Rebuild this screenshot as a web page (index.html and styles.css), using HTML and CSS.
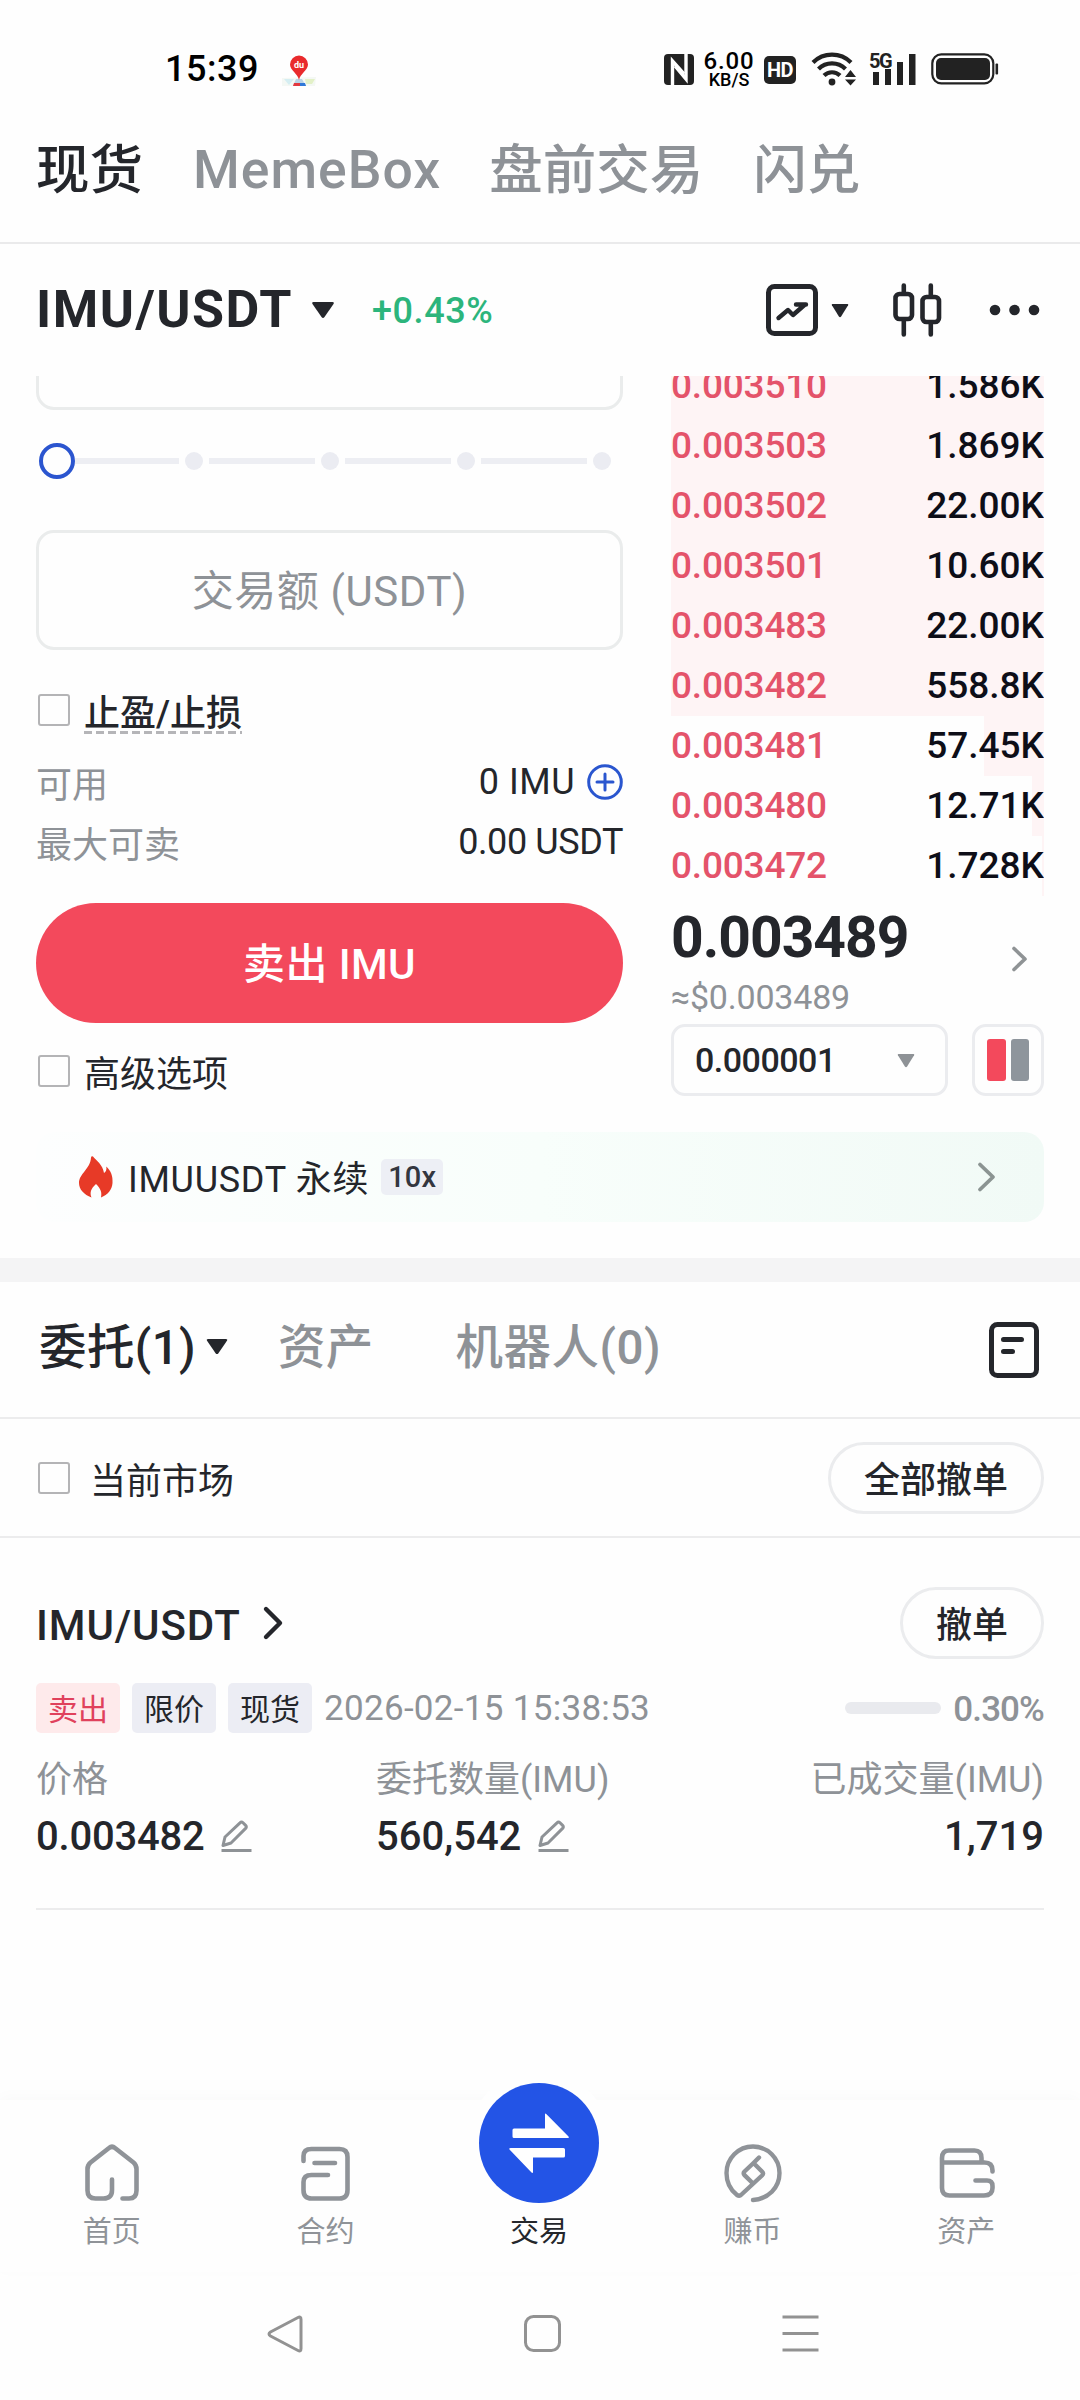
FILE: index.html
```html
<!DOCTYPE html>
<html lang="zh-CN">
<head>
<meta charset="utf-8">
<title>IMU/USDT 现货交易</title>
<link rel="stylesheet" href="styles.css">
</head>
<body>
<div class="screen">

  <header class="status">
    <span class="clock">15:39</span>
    <svg class="map-pin" width="36" height="32" viewBox="0 0 36 32">
      <path d="M1 23 35 22 34 31 1 31Z" fill="#f4f8f4"/>
      <path d="M3 24h10l-5 6z" fill="#d5eef2"/><path d="M24 24h10l-3 5h-6z" fill="#e3f1c8"/>
      <path d="M15 24h6l4 7H12z" fill="#b9d3e6"/>
      <path d="M13 28h6v3h-7z" fill="#e2383f"/><path d="M19 28h5l1 3h-6z" fill="#2f78d8"/>
      <path d="M18 25C17 19 9 15 9 9.500a9 9 0 0 1 18 0C27 15 19 19 18 25z" fill="#e92a2c"/>
      <text x="18" y="13" class="pin-text">du</text>
    </svg>
    <div class="status-right">
      <svg width="30" height="31" viewBox="0 0 30 31">
        <rect width="30" height="31" rx="4" fill="#222"/>
        <path d="M8.500 31V7L20 20" fill="none" stroke="#fff" stroke-width="3.400"/>
        <path d="M22 0V25L11 12" fill="none" stroke="#fff" stroke-width="3.400"/>
      </svg>
      <div class="speed"><span>6.00</span><small>KB/S</small></div>
      <span class="hd">HD</span>
      <svg class="wifi" width="46" height="36" viewBox="0 0 46 36">
        <g fill="none" stroke="#222" stroke-width="4.200">
          <path d="M2 12.500a27 27 0 0 1 38 0"/><path d="M7.500 19a19 19 0 0 1 27 0"/><path d="M13 25.500a11.500 11.500 0 0 1 16 0"/>
        </g>
        <circle cx="21" cy="32" r="3.400" fill="#222"/>
        <path d="M34 27l5.500-7 5.500 7zM34 29.500h11l-5.500 6z" fill="#222"/>
      </svg>
      <svg class="signal" width="48" height="34" viewBox="0 0 48 34">
        <text x="0" y="16.500" class="g5">5G</text>
        <path d="M4 21h6v13H4zM16 18h6v16h-6zM28 11h6v23h-6zM40 3h6.500v31H40z" fill="#222"/>
      </svg>
      <svg class="battery" width="68" height="32" viewBox="0 0 68 32">
        <rect x="1.300" y="1.300" width="61" height="29" rx="9" fill="none" stroke="#222" stroke-width="2.200"/>
        <rect x="5" y="5" width="54" height="22" rx="5" fill="#222"/>
        <rect x="64.500" y="10.500" width="2.600" height="11" rx="1" fill="#222"/>
      </svg>
    </div>
  </header>

  <nav class="market-tabs">
    <span class="on">现货</span><span>MemeBox</span><span>盘前交易</span><span>闪兑</span>
  </nav>

  <section class="pair-bar">
    <h1>IMU/USDT</h1>
    <svg class="caret" width="24" height="19" viewBox="0 0 24 19"><path d="M2.500 1h19q2 0 1 2l-9 13q-1.500 2-3 0L1.500 3q-1-2 1-2z" fill="#24262b"/></svg>
    <span class="change">+0.43%</span>
    <div class="pair-tools">
      <svg width="52" height="52" viewBox="0 0 52 52" fill="none" stroke="#24262b" stroke-linecap="round" stroke-linejoin="round">
        <rect x="2.500" y="2.500" width="47" height="47" rx="6" stroke-width="5"/>
        <path d="M12.500 34 22 26l5 5L39 20.500M30 20.500H40" stroke-width="4.400"/>
      </svg>
      <svg class="mini" width="18" height="15" viewBox="0 0 18 15"><path d="M1.500 1h15q1.200 0 .6 1.200l-7 11.300q-1.100 1.300-2.200 0L.9 2.200Q.3 1 1.500 1z" fill="#24262b"/></svg>
      <svg class="candles" width="50" height="54" viewBox="0 0 50 54" fill="none" stroke="#24262b" stroke-linecap="round" stroke-width="4.600">
        <rect x="2.500" y="11" width="16.500" height="25" rx="4"/><path d="M10.800 2.500V10M10.800 38v13.500"/>
        <rect x="29.500" y="14" width="16.500" height="25" rx="4"/><path d="M37.800 2.500V13M37.800 41v10.500"/>
      </svg>
      <svg width="52" height="12" viewBox="0 0 52 12" fill="#24262b"><circle cx="6" cy="6" r="5.300"/><circle cx="25.500" cy="6" r="5.300"/><circle cx="45" cy="6" r="5.300"/></svg>
    </div>
  </section>

  <main class="trade">
    <section class="form">
      <div class="field-clip"><div class="field-tail"></div></div>
      <div class="slider">
        <i class="knob"></i><i class="track first"></i><i class="dot"></i><i class="track"></i><i class="dot"></i><i class="track"></i><i class="dot"></i><i class="track"></i><i class="dot"></i>
      </div>
      <div class="amount">交易额 (USDT)</div>
      <label class="check tpsl"><i class="box"></i><span class="dashed">止盈/止损</span></label>
      <div class="info first-info"><span>可用</span><b class="free">0 IMU</b>
        <svg width="36" height="36" viewBox="0 0 36 36" fill="none" stroke="#2a56cf" stroke-width="3" stroke-linecap="round"><circle cx="18" cy="18" r="16.300"/><path d="M10 18h16M18 10v16"/></svg>
      </div>
      <div class="info"><span>最大可卖</span><b>0.00 USDT</b></div>
      <div class="sell">卖出 IMU</div>
      <label class="check adv"><i class="box"></i><span>高级选项</span></label>
    </section>

    <section class="book">
      <div class="asks">
        <div class="ask full"><span>0.003510</span><b>1.586K</b></div>
        <div class="ask full"><span>0.003503</span><b>1.869K</b></div>
        <div class="ask full"><span>0.003502</span><b>22.00K</b></div>
        <div class="ask full"><span>0.003501</span><b>10.60K</b></div>
        <div class="ask full"><span>0.003483</span><b>22.00K</b></div>
        <div class="ask full"><span>0.003482</span><b>558.8K</b></div>
        <div class="ask" style="background-size:60px 100%"><span>0.003481</span><b>57.45K</b></div>
        <div class="ask" style="background-size:12px 100%"><span>0.003480</span><b>12.71K</b></div>
        <div class="ask" style="background-size:2px 100%"><span>0.003472</span><b>1.728K</b></div>
      </div>
      <div class="last">
        <div><strong>0.003489</strong><em>≈$0.003489</em></div>
        <svg width="18" height="28" viewBox="0 0 18 28" fill="none" stroke="#8f9395" stroke-width="3.600" stroke-linecap="round" stroke-linejoin="round"><path d="M3 3.500 14 14 3 24.500"/></svg>
      </div>
      <div class="book-tools">
        <div class="step"><span>0.000001</span><svg width="18" height="15" viewBox="0 0 18 15"><path d="M1.500 1h15q1.200 0 .6 1.200l-7 11.300q-1.100 1.300-2.200 0L.9 2.200Q.3 1 1.500 1z" fill="#8e9296"/></svg></div>
        <div class="layout"><i class="red"></i><i></i></div>
      </div>
    </section>
  </main>

  <div class="perp">
    <svg width="34" height="42" viewBox="0 0 34 42"><path d="M14 .5C17 4 24 9 25 17c2-1 2.800-3.500 2.300-6.500C32 15 34 20 33.500 27 33 34 29 38.500 22 41.500c1-5 0-8.500-5-13.500-5 4.500-6.500 8.500-4.500 13.500C5 38.500 0 33.500 0 27 0 17.500 11.500 13 12 1.500Q12.500-.5 14 .5z" fill="#e73a27"/></svg>
    <span>IMUUSDT 永续</span><small>10x</small>
    <svg class="go" width="20" height="32" viewBox="0 0 20 32" fill="none" stroke="#8b9492" stroke-width="3.800" stroke-linecap="round" stroke-linejoin="round"><path d="M3 3.500 16 16 3 28.500"/></svg>
  </div>
  <div class="band"></div>

  <nav class="order-tabs">
    <span class="on">委托(1)</span>
    <svg class="caret" width="24" height="18" viewBox="0 0 24 19"><path d="M2.500 1h19q2 0 1 2l-9 13q-1.500 2-3 0L1.500 3q-1-2 1-2z" fill="#24262b"/></svg>
    <span class="assets">资产</span><span class="bots">机器人(0)</span>
    <svg class="list" width="50" height="56" viewBox="0 0 50 56" fill="none" stroke="#24262b" stroke-width="5" stroke-linecap="round"><rect x="2.500" y="2.500" width="45" height="51" rx="6"/><path d="M14.500 17.500h18M14.500 29.500h9"/></svg>
  </nav>
  <div class="filter">
    <label class="check wide"><i class="box"></i><span>当前市场</span></label>
    <span class="pill">全部撤单</span>
  </div>

  <article class="order">
    <div class="order-head">
      <h2>IMU/USDT</h2>
      <svg width="22" height="36" viewBox="0 0 22 36" fill="none" stroke="#24262b" stroke-width="4.400" stroke-linecap="round" stroke-linejoin="round"><path d="M4 4 18 18 4 32"/></svg>
      <span class="pill">撤单</span>
    </div>
    <div class="tags">
      <span class="tag sell-tag">卖出</span><span class="tag">限价</span><span class="tag">现货</span>
      <time>2026-02-15 15:38:53</time>
      <i class="bar"></i><b>0.30%</b>
    </div>
    <div class="cols">
      <div><span>价格</span><b class="price">0.003482 <svg width="31" height="33" viewBox="0 0 31 33" fill="none" stroke="#8e9296" stroke-width="3"><path d="M2 25.500 4 17 19 2.800q1.500-1.500 3 0l2.600 2.600q1.500 1.500 0 3L10 23z" stroke-linejoin="round"/><path d="M.5 30.500h30"/></svg></b></div>
      <div><span>委托数量(IMU)</span><b>560,542 <svg width="31" height="33" viewBox="0 0 31 33" fill="none" stroke="#8e9296" stroke-width="3"><path d="M2 25.500 4 17 19 2.800q1.500-1.500 3 0l2.600 2.600q1.500 1.500 0 3L10 23z" stroke-linejoin="round"/><path d="M.5 30.500h30"/></svg></b></div>
      <div class="end"><span>已成交量(IMU)</span><b>1,719</b></div>
    </div>
  </article>

  <footer class="tabbar">
    <div class="tab">
      <svg width="56" height="60" viewBox="0 0 56 60" fill="none" stroke="#8f9398" stroke-width="4.600" stroke-linecap="round" stroke-linejoin="round"><path d="M38.500 55.500H45q7.500 0 7.500-8V26q0-4-3-6.500L31 5q-3-2.500-6 0L6.500 19.500q-3 2.500-3 6.500V47.500q0 8 8 8h8q8.500 0 8.500-8.500V36.500"/></svg>
      <span>首页</span></div>
    <div class="tab">
      <svg width="56" height="60" viewBox="0 0 56 60" fill="none" stroke="#8f9398" stroke-width="4.600" stroke-linecap="round" stroke-linejoin="round"><path d="M6.500 18V13q0-7 8-7h28q8 0 8 8V47q0 8.500-8 8.500H14.500q-8 0-8-8.500V39q0-7 8-7H31M17.500 20H38"/></svg>
      <span>合约</span></div>
    <div class="tab active">
      <div class="swap"><svg width="60" height="62" viewBox="0 0 60 62" fill="#fff"><path d="M5 16.500H36V2.500q0-2 1.500-.3L59.500 24.500q1 1.500-1 1.500H5q-1.500 0-1.500-1.500V18q0-1.500 1.500-1.500z"/><path d="M1.500 36H54.500q1.500 0 1.500 1.500V44q0 1.500-1.500 1.500H24V60q0 1.500-1.500.5L.5 37.500Q-.5 36 1.500 36z"/></svg></div>
      <span>交易</span></div>
    <div class="tab">
      <svg width="58" height="60" viewBox="0 0 58 60" fill="none" stroke="#8f9398" stroke-width="4.400" stroke-linecap="round" stroke-linejoin="round"><path d="M29 57C44 56 55.500 45 55.500 30A26.500 26.500 0 0 0 2.500 30C2.500 39 6.500 47 13 52q2.500 1.500 4.500-.5L38 32.500q2-2 0-4L29.500 20 20.500 28.500q-1.800 1.800 0 3.600L28 39.500M29.500 20 35 14.500"/></svg>
      <span>赚币</span></div>
    <div class="tab">
      <svg width="58" height="60" viewBox="0 0 58 60" fill="none" stroke="#8f9398" stroke-width="4.600" stroke-linecap="round" stroke-linejoin="round"><path d="M5 19.500H47.500q8 0 8 8V28.500M44.500 19V15q0-7.500-7-7.500H12q-7 0-7 7.500V45q0 7.500 7.500 7.500H47q8.500 0 8.500-7.500V43q0-5.500-5.500-5.500H38.500"/></svg>
      <span>资产</span></div>
  </footer>
  <footer class="sysnav">
    <svg width="36" height="38" viewBox="0 0 36 38"><path d="M31 2.500Q34 1 34 4.500v29q0 3.500-3 2L3.500 21q-3-2 0-4z"/></svg>
    <svg width="37" height="37" viewBox="0 0 37 37"><rect x="1.500" y="1.500" width="34" height="34" rx="8"/></svg>
    <svg width="37" height="37" viewBox="0 0 37 37"><path d="M.5 2h36M.5 18.500h36M.5 35h36"/></svg>
  </footer>
</div>
</body>
</html>
```
FILE: styles.css
```css
* { box-sizing: border-box; }
body {
  margin: 0;
  background: #fefefe;
  color: #24262b;
  font-family: Roboto, "Noto Sans CJK SC", sans-serif;
}
svg { display: block; flex: none; overflow: visible; }
h1, h2, b, em, strong, small { margin: 0; font-style: normal; }
.screen { width: 1080px; height: 2400px; overflow: hidden; display: flex; flex-direction: column; }
.screen > * { flex: none; }

.status { height: 138px; padding: 0 81px 0 165px; display: flex; align-items: center; }
.clock { font-size: 36px; font-weight: 500; color: #000; letter-spacing: .5px; width: 116px; }
.map-pin { margin-top: 3px; }
.pin-text { font-size: 9px; font-weight: 700; fill: #fff; text-anchor: middle; }
.status-right { margin-left: auto; display: flex; align-items: center; }
.speed { width: 52px; margin-left: 9px; display: flex; flex-direction: column; align-items: center; color: #000; font-weight: 500; }
.speed span { font-size: 24px; line-height: 20px; letter-spacing: .9px; }
.speed small { font-size: 18px; line-height: 17px; }
.hd { width: 32px; height: 28px; margin: 2px 0 0 9px; border-radius: 5px; background: #222; color: #fff; font-size: 20px; font-weight: 700; line-height: 28px; text-align: center; letter-spacing: -.5px; }
.wifi { margin: -2px 0 0 15px; }
.signal { margin: -2px 0 0 12px; }
.g5 { font-size: 20px; font-weight: 700; fill: #222; letter-spacing: -1.500px; }
.battery { margin-left: 14px; }

.market-tabs { height: 106px; padding: 0 36px; border-bottom: 2px solid #eaeaeb; display: flex; gap: 50px; font-size: 53.500px; font-weight: 500; line-height: 66px; color: #8e9297; }
.market-tabs .on { color: #24262b; }
.market-tabs span:nth-child(2) { margin-right: -2px; letter-spacing: 1px; line-height: 64px; }

.pair-bar { height: 132px; padding: 0 39px 0 36px; display: flex; align-items: center; }
.pair-bar h1 { font-size: 52px; font-weight: 700; letter-spacing: 1.500px; margin-top: -2px; }
.pair-bar .caret { margin-left: 18px; }
.change { margin: 2px 0 0 37px; font-size: 36px; font-weight: 500; color: #2cb57c; letter-spacing: .6px; }
.pair-tools { margin-left: auto; display: flex; align-items: center; }
.mini { margin-left: 13px; }
.candles { margin: 0 46px 0 44px; }

.trade { height: 756px; padding: 0 36px; display: flex; justify-content: space-between; }
.form { width: 587px; display: flex; flex-direction: column; }
.field-clip { height: 34px; overflow: hidden; display: flex; align-items: flex-end; }
.field-tail { flex: 1; height: 120px; border: 3px solid #eaecec; border-radius: 18px; }
.slider { height: 102px; padding: 0 12px 0 3px; display: flex; align-items: center; }
.knob { width: 36px; height: 36px; border: 4.500px solid #2b55cf; border-radius: 50%; }
.track { width: 106px; height: 6px; background: #edeef3; }
.track.first { flex: 1; }
.dot { width: 18px; height: 18px; margin: 0 6px; border-radius: 50%; background: #ebecf2; }
.dot:last-child { margin-right: 0; }
.amount { height: 120px; margin-top: 18px; border: 3px solid #eaecec; border-radius: 18px; font-size: 42px; letter-spacing: .6px; line-height: 117px; text-align: center; color: #8e9297; }
.check { height: 60px; padding-left: 2px; display: flex; align-items: center; gap: 14px; font-size: 36px; }
.box { width: 32px; height: 32px; border: 2px solid #b4b4b6; border-radius: 3px; }
.tpsl { margin-top: 30px; font-weight: 500; }
.dashed { height: 44px; line-height: 48px; margin-top: 4px; background: repeating-linear-gradient(90deg, #b5b5b8 0 8px, transparent 8px 12px) bottom / 100% 3px no-repeat; }
.info { height: 60px; display: flex; align-items: center; font-size: 36px; color: #8e9297; }
.info b { margin-left: auto; font-weight: 400; color: #24262b; letter-spacing: -.4px; }
.info .free { letter-spacing: .5px; }
.info svg { margin-left: 12px; }
.first-info { margin-top: 12px; }
.sell { height: 120px; margin-top: 31px; border-radius: 60px; background: #f3495c; color: #fff; font-size: 42px; font-weight: 500; letter-spacing: .4px; line-height: 123px; text-align: center; }
.adv { margin-top: 18px; }

.book { width: 373px; }
.asks { height: 520px; overflow: hidden; display: flex; flex-direction: column; justify-content: flex-end; }
.ask { height: 60px; flex: none; display: flex; justify-content: space-between; align-items: center; padding-bottom: 2px; font-size: 37px; font-weight: 500; color: #e4536a; background: linear-gradient(#fef4f5, #fef4f5) right / 0 100% no-repeat; }
.ask.full { background-size: 100% 100%; }
.ask span { letter-spacing: -.2px; }
.ask b { font-weight: 500; color: #0d0e18; }
.last { height: 128px; padding-right: 15px; display: flex; justify-content: space-between; align-items: center; }
.last div { display: flex; flex-direction: column; padding-top: 7px; }
.last strong { font-size: 57px; font-weight: 700; line-height: 66px; letter-spacing: -1px; }
.last em { font-size: 34px; line-height: 52px; color: #8e9297; letter-spacing: -.2px; }
.last svg { margin-bottom: 2px; }
.book-tools { display: flex; justify-content: space-between; }
.step { width: 277px; height: 72px; padding: 0 30px 0 21px; border: 3px solid #ebecef; border-radius: 14px; display: flex; justify-content: space-between; align-items: center; font-size: 34px; font-weight: 500; letter-spacing: -.5px; }
.layout { width: 72px; height: 72px; border: 3px solid #ebecef; border-radius: 14px; display: flex; justify-content: center; align-items: center; gap: 5px; }
.layout i { width: 18.500px; height: 42px; border-radius: 3px; background: #8e959c; }
.layout .red { background: #f3495c; }

.perp { height: 90px; margin: 0 36px; padding: 0 47px 0 43px; border-radius: 20px; background: linear-gradient(90deg, #fdfefe, #f8fefb 50%, #f1faf6); display: flex; align-items: center; font-size: 36px; }
.perp span { margin: -2px 0 0 15px; letter-spacing: .7px; }
.perp small { height: 36px; margin-left: 12px; padding: 0 7px; border-radius: 5px; background: #edeff5; font-size: 29px; line-height: 36px; font-weight: 500; letter-spacing: .2px; color: #33363f; }
.go { margin-left: auto; }
.band { height: 24px; margin-top: 36px; background: #f4f4f5; }

.order-tabs { height: 137px; padding: 0 41px 6px 39px; border-bottom: 2px solid #ececed; display: flex; align-items: center; font-size: 47.500px; font-weight: 500; color: #8e9297; }
.order-tabs span { margin-top: -7px; letter-spacing: .2px; }
.order-tabs .on { color: #24262b; letter-spacing: .4px; }
.order-tabs .caret { margin-left: 9px; }
.order-tabs .assets { margin-left: 49px; }
.order-tabs .bots { margin-left: 82px; letter-spacing: .5px; }
.list { margin: 6px 0 0 auto; }
.filter { height: 119px; padding: 0 36px; border-bottom: 2px solid #ececed; display: flex; justify-content: space-between; align-items: center; }
.wide { gap: 20px; }
.pill { height: 72px; padding: 0 33px; border: 3px solid #ebecee; border-radius: 36px; font-size: 36px; font-weight: 500; line-height: 72px; }

.order { height: 372px; margin: 0 36px; padding-top: 48px; border-bottom: 2px solid #ececed; }
.order-head { height: 73px; display: flex; align-items: center; }
.order-head h2 { font-size: 42px; font-weight: 500; letter-spacing: .9px; padding-top: 5px; }
.order-head svg { margin-left: 21px; }
.order-head .pill { margin-left: auto; }
.tags { height: 50px; margin-top: 24px; display: flex; align-items: center; gap: 12px; }
.tag { width: 84px; height: 50px; border-radius: 5px; background: #ecedf4; font-size: 30px; line-height: 54px; text-align: center; }
.sell-tag { background: #feeaeb; color: #e0415c; }
.tags time { font-size: 35px; color: #8e9297; letter-spacing: .3px; }
.bar { width: 96px; height: 12px; margin-left: auto; border-radius: 6px; background: #e9eaee; }
.tags b { font-size: 35px; font-weight: 500; color: #8e9297; letter-spacing: -.9px; margin-top: 3px; }
.cols { margin-top: 22px; display: grid; grid-template-columns: 340px 340px 1fr; font-size: 36px; color: #8e9297; }
.cols div { display: flex; flex-direction: column; }
.cols span { line-height: 50px; }
.cols b { height: 62px; display: flex; align-items: center; gap: 17px; font-size: 40px; font-weight: 500; color: #24262b; }
.cols .price { letter-spacing: -.2px; gap: 16px; }
.cols .end { align-items: flex-end; }

.tabbar { height: 172px; margin-top: 190px; padding: 0 7px 0 5px; display: grid; grid-template-columns: repeat(5, 1fr); box-shadow: 0 -3px 14px rgba(0, 0, 0, .025); }
.tab { display: flex; flex-direction: column; align-items: center; padding-top: 43px; font-size: 29px; line-height: 40px; color: #8f9398; }
.tab span { margin-top: 9px; }
.active { padding-top: 0; color: #24262b; }
.swap { width: 120px; height: 120px; margin-top: -17px; border-radius: 50%; background: #2354e6; box-shadow: 0 0 0 12px #fefefe; display: flex; justify-content: center; align-items: center; }
.sysnav { padding: 43px 261px 0 267px; display: flex; justify-content: space-between; }
.sysnav svg { fill: none; stroke: #929292; stroke-width: 3; }
```
